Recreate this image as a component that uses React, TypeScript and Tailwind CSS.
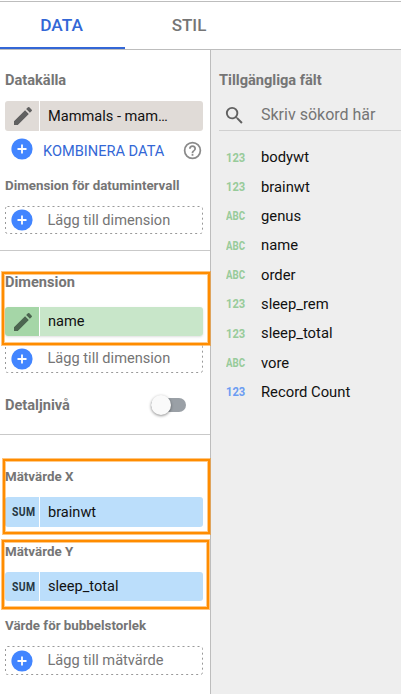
import type { ReactNode } from 'react';

function Label({ className = '', children }: { className?: string; children: ReactNode }) {
  return (
    <div className={`flex items-center whitespace-nowrap pl-[5px] font-bold text-[#757575] ${className}`}>
      {children}
    </div>
  );
}

function Pencil({ className }: { className: string }) {
  return (
    <svg viewBox="0 0 24 24" className={`ml-0.5 size-6 ${className}`} fill="currentColor">
      <path d="M3 17.25V21h3.75L17.81 9.94l-3.75-3.75L3 17.25zM20.71 7.04a1 1 0 0 0 0-1.41l-2.34-2.34a1 1 0 0 0-1.41 0l-1.83 1.83 3.75 3.75 1.83-1.83z" />
    </svg>
  );
}

function Plus() {
  return (
    <svg viewBox="0 0 22 22" className="size-[22px] shrink-0">
      <circle cx="11" cy="11" r="10.6" fill="#4285ff" />
      <path d="M11 6.5v9M6.5 11h9" stroke="#fff" strokeWidth="1.8" />
    </svg>
  );
}

function Chip({ icon, text, body, side, size }: { icon: ReactNode; text: string; body: string; side: string; size: string }) {
  return (
    <div className={`ml-[5px] flex w-[198px] shrink-0 overflow-hidden rounded-[3px] ${size}`}>
      <div className={`flex w-[34px] shrink-0 items-center justify-center ${side}`}>{icon}</div>
      <div className="w-px bg-white" />
      <div className={`flex flex-1 items-center pl-2 text-[14.6px] text-[#111] ${body}`}>{text}</div>
    </div>
  );
}

function AddBox({ text, size, shift = '' }: { text: string; size: string; shift?: string }) {
  return (
    <div className={`relative ml-[5px] flex w-[198px] shrink-0 items-center pl-[6px] text-[14.6px] text-[#757575] ${size}`}>
      <svg className="absolute inset-0 size-full" fill="none">
        <rect x="0.5" y="0.5" width="197" className="h-[calc(100%-1px)]" rx="2" stroke="#999" strokeDasharray="2 3" />
      </svg>
      <Plus />
      <span className={`ml-[14.5px] ${shift}`}>{text}</span>
    </div>
  );
}

function Sum() {
  return <span className="ml-[3px] scale-x-[0.8] text-[13px] font-bold tracking-[0.5px] text-[#263844]">SUM</span>;
}

function Highlight({ className }: { className: string }) {
  return (
    <div
      className={`absolute border-2 border-[#ff8c00] shadow-[0_0_0_1px_rgba(255,140,0,0.5),inset_0_0_0_1px_rgba(255,140,0,0.45)] ${className}`}
    />
  );
}

const fields = [
  ['123', 'bodywt'],
  ['123', 'brainwt'],
  ['ABC', 'genus'],
  ['ABC', 'name'],
  ['ABC', 'order'],
  ['123', 'sleep_rem'],
  ['123', 'sleep_total'],
  ['ABC', 'vore'],
  ['123', 'Record Count'],
];

export default function App() {
  return (
    <div className="relative flex h-[694px] w-[401px] flex-col overflow-hidden bg-white font-[Roboto,sans-serif]">
      <div className="mt-px flex h-[49px] shrink-0 border-y border-[#bdbdbd] text-[17px] font-medium">
        <div className="flex w-[125px] items-center justify-center border-b-2 border-[#3367d6] text-[#3367d6]">
          <span className="mr-[2px] mt-[2px] text-[17.3px]">DATA</span>
        </div>
        <div className="flex w-[128px] items-center justify-center text-[#757575]">STIL</div>
      </div>

      <div className="flex min-h-0 flex-1">
        <div className="flex w-[211px] shrink-0 flex-col border-r border-[#bdbdbd]">
          <Label className="mt-5 h-5 pt-px text-[14.6px]">Datakälla</Label>
          <Chip icon={<Pencil className="text-[#616161]" />} text="Mammals - mam…" body="bg-[#e0dbd7] pt-px" side="bg-[#e0dbd7]" size="mt-[11px] h-[30px]" />
          <div className="mt-[7px] flex h-[22px] shrink-0 items-center pl-[10.5px]">
            <Plus />
            <span className="ml-[10.5px] mt-[5px] w-[122px] whitespace-nowrap text-[14.6px] text-[#3367d6]">KOMBINERA DATA</span>
            <svg viewBox="0 0 24 24" className="ml-[17px] mt-0.5 size-[21px]" fill="#8a8a8a">
              <path d="M11 18h2v-2h-2v2zm1-16a10 10 0 1 0 0 20 10 10 0 0 0 0-20zm0 18a8 8 0 1 1 0-16 8 8 0 0 1 0 16zm0-14a4 4 0 0 0-4 4h2a2 2 0 1 1 4 0c0 2-3 1.75-3 5h2c0-2.25 3-2.5 3-5a4 4 0 0 0-4-4z" />
            </svg>
          </div>
          <Label className="mt-[15px] h-5 pt-[2px] text-[13.35px]">Dimension för datumintervall</Label>
          <AddBox text="Lägg till dimension" size="mt-[11px] h-[28px]" shift="pt-px" />
          <div className="mt-4 h-px shrink-0 bg-[#c9c9c9]" />
          <Label className="mt-[21px] h-5 pt-px text-[14.6px]">Dimension</Label>
          <Chip icon={<Pencil className="text-[#4c6650]" />} text="name" body="bg-[#c8e6c9]" side="bg-[#a5d6a7]" size="mt-[15px] h-[29px] shadow-sm" />
          <AddBox text="Lägg till dimension" size="mt-[8px] h-[29px]" />
          <div className="mt-[22px] flex h-5 shrink-0 items-center">
            <Label className="w-[151px] pt-px text-[14.6px]">Detaljnivå</Label>
            <div className="flex h-[14px] w-[35px] items-center rounded-full bg-[#9aa0a6]">
              <div className="size-5 rounded-full bg-[#fafafa] shadow-[0_1px_3px_rgba(0,0,0,0.45)]" />
            </div>
          </div>
          <div className="mt-[19px] h-px shrink-0 bg-[#c9c9c9]" />
          <Label className="mt-[32px] h-5 text-[13.35px]">Mätvärde X</Label>
          <Chip icon={<Sum />} text="brainwt" body="bg-[#bbdefb] pt-px" side="bg-[#bbdefb]" size="mt-[10px] h-[30px]" />
          <Label className="mt-[15px] h-5 text-[13.35px]">Mätvärde Y</Label>
          <Chip icon={<Sum />} text="sleep_total" body="bg-[#bbdefb]" side="bg-[#bbdefb]" size="mt-[10px] h-[29px]" />
          <Label className="mt-[15px] h-5 text-[13.35px]">Värde för bubbelstorlek</Label>
          <AddBox text="Lägg till mätvärde" size="mt-[10px] h-[29px]" />
        </div>

        <div className="flex flex-1 flex-col bg-[#eeeeee] pl-2">
          <Label className="mt-5 h-5 !pl-0 pt-px text-[14.6px]">Tillgängliga fält</Label>
          <div className="mt-[9px] flex h-8 items-center border-b border-[#d0d0d0] pl-1">
            <svg viewBox="0 0 24 24" className="mt-px size-[23px]" fill="#616161">
              <path d="M15.5 14h-.79l-.28-.27A6.47 6.47 0 0 0 16 9.5 6.5 6.5 0 1 0 9.5 16c1.61 0 3.09-.59 4.23-1.57l.27.28v.79l5 4.99L20.49 19l-4.99-5zm-6 0a4.5 4.5 0 1 1 0-9 4.5 4.5 0 0 1 0 9z" />
            </svg>
            <span className="ml-[15px] text-[16px] text-[#757575]">Skriv sökord här</span>
          </div>
          <div className="mt-[11.6px] flex flex-col">
            {fields.map(([kind, name]) => (
              <div key={name} className="flex h-[29.35px] items-center pl-[7px]">
                <span className={`mb-px w-[35px] text-[13.5px] font-bold ${name === 'Record Count' ? 'text-[#6b9cf2]' : 'text-[#98cb9a]'}`}>
                  <span className={`inline-block origin-left ${kind === '123' ? 'scale-x-[0.83]' : 'scale-x-[0.72]'}`}>{kind}</span>
                </span>
                <span className="text-[14.8px] text-[#111]">{name}</span>
              </div>
            ))}
          </div>
        </div>
      </div>

      <Highlight className="left-[2px] top-[272px] h-[73px] w-[208px]" />
      <Highlight className="left-[3px] top-[459px] h-[75px] w-[207px]" />
      <Highlight className="left-[2px] top-[540px] h-[69px] w-[207px]" />
    </div>
  );
}
